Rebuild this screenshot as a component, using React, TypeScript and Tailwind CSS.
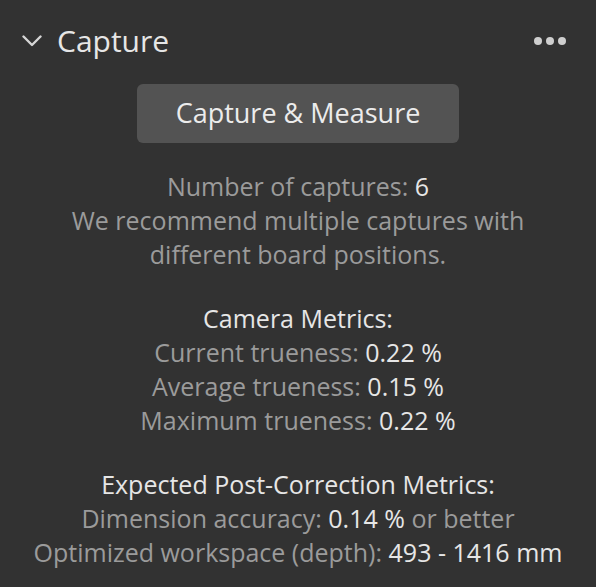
const metrics = [
  { label: "Current trueness:", value: "0.22 %" },
  { label: "Average trueness:", value: "0.15 %" },
  { label: "Maximum trueness:", value: "0.22 %" },
];

export default function App() {
  return (
    <div className="w-[596px] h-[587px] bg-[#323232] font-['Open_Sans',sans-serif] text-[#9b9b9b] overflow-hidden">
      {/* en-tête du panneau */}
      <div className="flex items-center h-[84px] pl-[22px] pr-[30px] pb-[2px]">
        <svg width="20" height="12" viewBox="0 0 20 12" className="text-[#d6d6d6]">
          <polyline points="1.5,1.5 10,10 18.5,1.5" fill="none" stroke="currentColor" strokeWidth="2.4" strokeLinecap="round" strokeLinejoin="round" />
        </svg>
        <span className="ml-[15px] text-[30px] text-[#e6e6e6] leading-none">Capture</span>
        <div className="ml-auto flex gap-[4px]">
          <span className="w-[8px] h-[8px] rounded-full bg-[#cfcfcf]" />
          <span className="w-[8px] h-[8px] rounded-full bg-[#cfcfcf]" />
          <span className="w-[8px] h-[8px] rounded-full bg-[#cfcfcf]" />
        </div>
      </div>

      <div className="flex justify-center">
        <button className="w-[322px] h-[59px] rounded-[6px] bg-[#535353] text-[#ececec] text-[27px]">
          Capture &amp; Measure
        </button>
      </div>

      <div className="mt-[26px] flex flex-col items-center text-center text-[25px] leading-[34px]">
        <p>
          Number of captures: <span className="text-[#e6e6e6]">6</span>
        </p>
        <p>We recommend multiple captures with</p>
        <p>different board positions.</p>

        <p className="mt-[30px] text-[#e6e6e6]">Camera Metrics:</p>
        {metrics.map((m) => (
          <p key={m.label}>
            {m.label} <span className="text-[#e6e6e6]">{m.value}</span>
          </p>
        ))}

        <p className="mt-[30px] text-[#e6e6e6]">Expected Post-Correction Metrics:</p>
        <p>
          Dimension accuracy: <span className="text-[#e6e6e6]">0.14 %</span> or better
        </p>
        <p>
          Optimized workspace (depth): <span className="text-[#e6e6e6]">493 - 1416 mm</span>
        </p>
      </div>
    </div>
  );
}
